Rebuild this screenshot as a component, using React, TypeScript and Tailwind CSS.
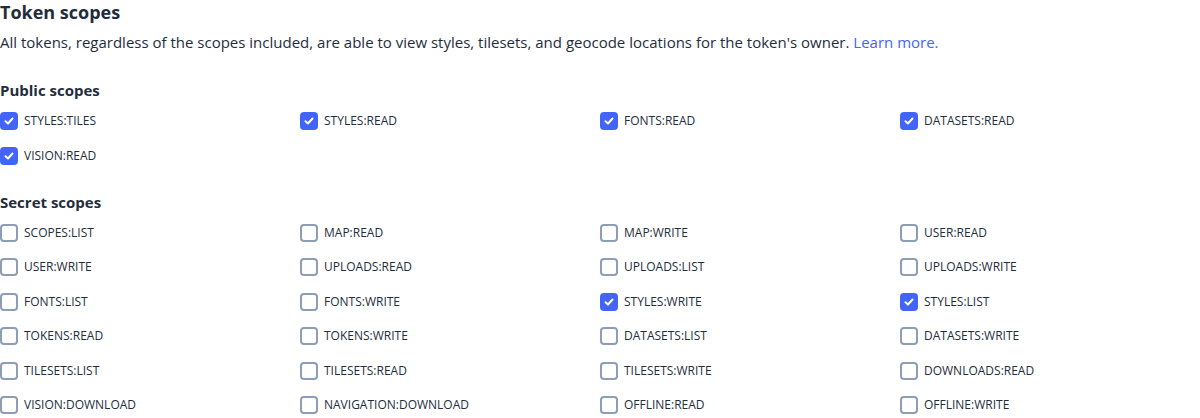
const publicScopes: [string, boolean][] = [
  ["STYLES:TILES", true],
  ["STYLES:READ", true],
  ["FONTS:READ", true],
  ["DATASETS:READ", true],
  ["VISION:READ", true],
];

const secretScopes: [string, boolean][] = [
  ["SCOPES:LIST", false],
  ["MAP:READ", false],
  ["MAP:WRITE", false],
  ["USER:READ", false],
  ["USER:WRITE", false],
  ["UPLOADS:READ", false],
  ["UPLOADS:LIST", false],
  ["UPLOADS:WRITE", false],
  ["FONTS:LIST", false],
  ["FONTS:WRITE", false],
  ["STYLES:WRITE", true],
  ["STYLES:LIST", true],
  ["TOKENS:READ", false],
  ["TOKENS:WRITE", false],
  ["DATASETS:LIST", false],
  ["DATASETS:WRITE", false],
  ["TILESETS:LIST", false],
  ["TILESETS:READ", false],
  ["TILESETS:WRITE", false],
  ["DOWNLOADS:READ", false],
  ["VISION:DOWNLOAD", false],
  ["NAVIGATION:DOWNLOAD", false],
  ["OFFLINE:READ", false],
  ["OFFLINE:WRITE", false],
];

function Scope({ name, checked }: { name: string; checked: boolean }) {
  return (
    <label className="flex items-center gap-[6px] h-[34.4px] cursor-pointer">
      {checked ? (
        <span className="w-[18px] h-[18px] rounded-[4px] bg-[#4264fb] flex items-center justify-center shrink-0">
          <svg width="12" height="12" viewBox="0 0 12 12" fill="none">
            <path d="M2.5 6.2 L5 8.5 L9.5 3.5" stroke="white" strokeWidth="2" strokeLinecap="round" strokeLinejoin="round" />
          </svg>
        </span>
      ) : (
        <span className="w-[18px] h-[18px] rounded-[4px] border-2 border-[#8c9db5] bg-white shrink-0" />
      )}
      <span className="text-[12px] text-[#1f2d3d]">{name}</span>
    </label>
  );
}

export default function App() {
  return (
    <div className="bg-white w-[1200px] h-[418px] overflow-hidden font-['Open_Sans',sans-serif] text-[#1f2d3d]">
      <h2 className="text-[18px] font-bold leading-[24px]">Token scopes</h2>
      <p className="text-[15px] leading-[24px] mt-[6px]">
        All tokens, regardless of the scopes included, are able to view styles, tilesets, and geocode locations for the token's owner.{" "}
        <a className="text-[#4264fb]">Learn more.</a>
      </p>

      <h3 className="text-[15px] font-bold leading-[20px] mt-[26px]">Public scopes</h3>
      <div className="grid grid-cols-4 mt-[4px]">
        {publicScopes.map(([name, checked]) => (
          <Scope key={name} name={name} checked={checked} />
        ))}
      </div>

      <h3 className="text-[15px] font-bold leading-[20px] mt-[19px]">Secret scopes</h3>
      <div className="grid grid-cols-4 mt-[4px]">
        {secretScopes.map(([name, checked]) => (
          <Scope key={name} name={name} checked={checked} />
        ))}
      </div>
    </div>
  );
}
